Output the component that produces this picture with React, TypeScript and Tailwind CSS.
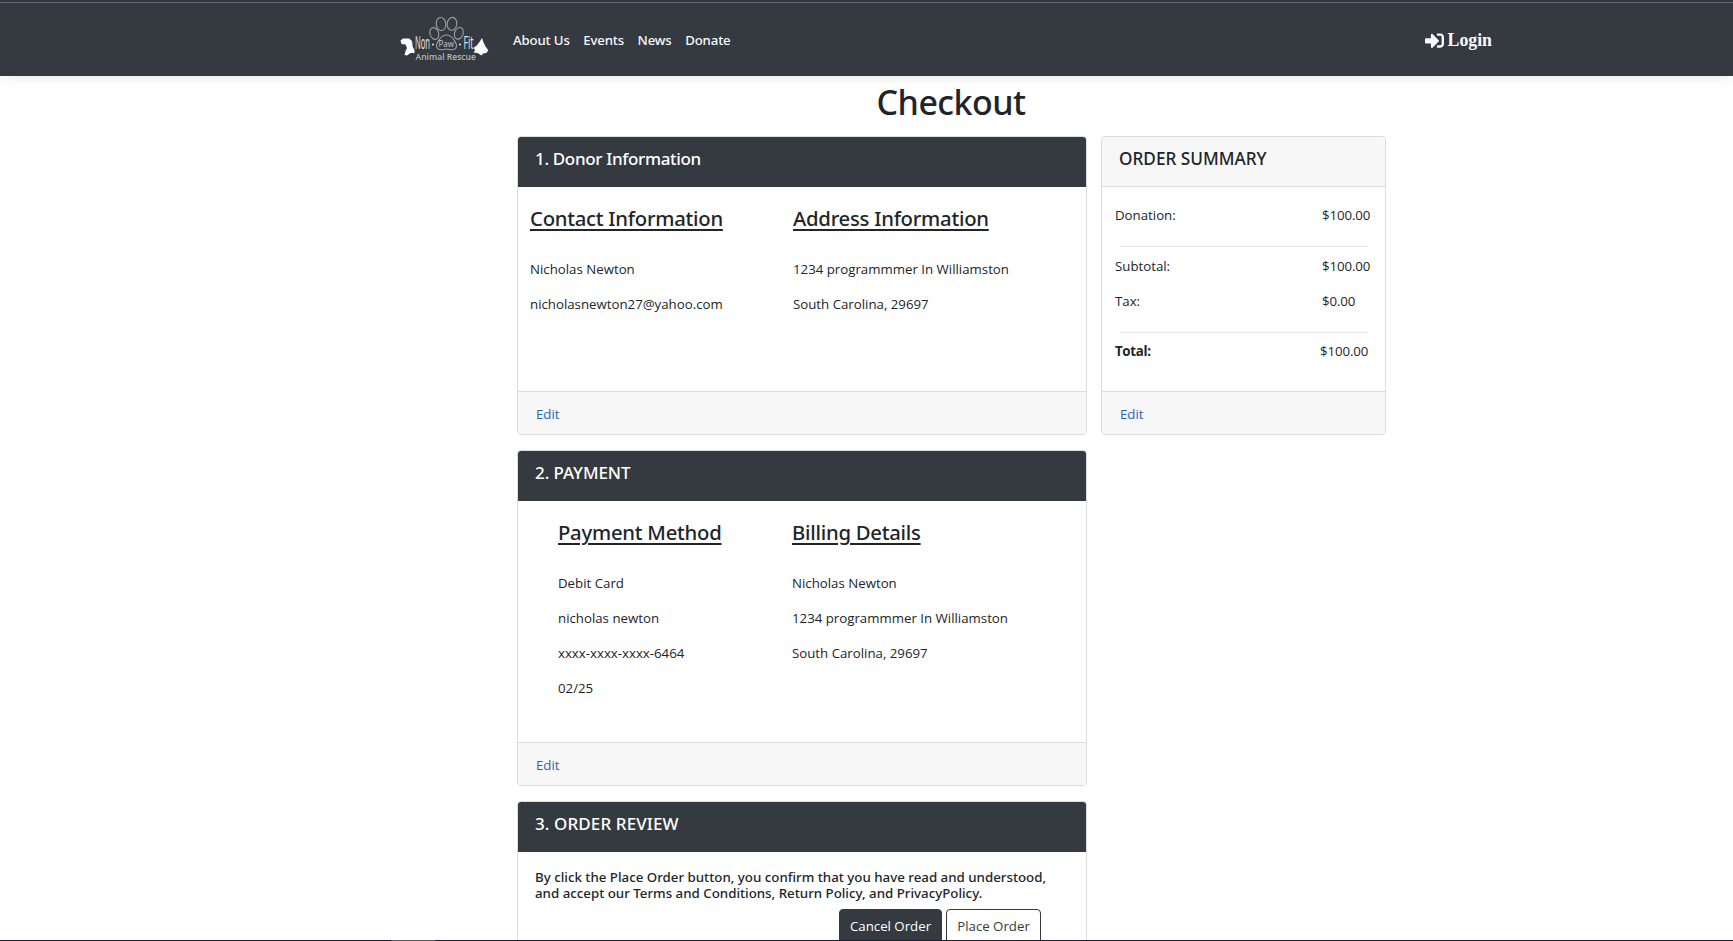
import React from "react";
import { FaSignInAlt } from "react-icons/fa";

function Logo() {
  return (
    <svg width="100" height="60" viewBox="0 0 100 60" className="block" fontFamily="Open Sans, sans-serif">
      <g fill="none" stroke="#9da1a6" strokeWidth="1.1">
        <ellipse cx="46" cy="14" rx="4.8" ry="6.5" transform="rotate(-8 46 14)" />
        <ellipse cx="57" cy="13.8" rx="4.8" ry="6.5" transform="rotate(8 57 13.8)" />
        <ellipse cx="39.3" cy="23.5" rx="4.3" ry="6" transform="rotate(-18 39.3 23.5)" />
        <ellipse cx="63.8" cy="23.3" rx="4.3" ry="6" transform="rotate(18 63.8 23.3)" />
        <path d="M51.500 25c-5 0-6.500 3.500-8.500 6.500-3 4.500-1 8.500 3 8.300 2 0 3-.8 5.500-.8s3.500.8 5.500.8c4 .2 6-3.800 3-8.300-2-3-3.500-6.500-8.500-6.500z" />
      </g>
      <g fill="#e4e6e8">
        <text x="20" y="38.500" fontSize="18.500" textLength="15" lengthAdjust="spacingAndGlyphs">Non</text>
        <text x="68.500" y="38.500" fontSize="18.500" textLength="10" lengthAdjust="spacingAndGlyphs">Fit</text>
        <text x="43.500" y="37" fontSize="8.500" textLength="15.500" lengthAdjust="spacingAndGlyphs" fill="#c9ccd0">Paw</text>
        <text x="20.500" y="50" fontSize="9" fontWeight="600" textLength="60.500" lengthAdjust="spacingAndGlyphs" fill="#b4b8bc">Animal Rescue</text>
        <circle cx="38" cy="34.500" r="1" />
        <circle cx="65" cy="34.500" r="1" />
      </g>
      <g fill="#fff">
        <path d="M5.500 30.500 8 28.500h6l3 2.500.8 6 1.700 3v3H15.500L12 45.500l-2.500-.5 1-4 1.500-3-1.500-3.500-4-.5z" />
        <path d="M87 28l1.500 4.500 2 4 2.800 3.800-2 2.700-3.300.5-1.500 2-4-2.500-4-.5 1.500-2-1.200-3 3-2 3-4z" />
      </g>
    </svg>
  );
}

function CardHeader({ children }: { children: React.ReactNode }) {
  return (
    <h5 className="h-[50px] shrink-0 rounded-t-[3px] bg-[#343a40] px-[17px] pt-[10px] font-['Noto_Sans',sans-serif] text-[17px] leading-[24px] font-medium tracking-[-0.07px] text-white">
      {children}
    </h5>
  );
}

function CardFooter() {
  return (
    <div className="h-[43px] shrink-0 rounded-b-[3px] border-t border-[#dcdcdc] bg-[#f7f7f7] px-[18px] pt-[12px] leading-[21px] text-[#2a62b8]">
      <a href="#edit">Edit</a>
    </div>
  );
}

function Details({ title, lines, className }: { title: string; lines: string[]; className: string }) {
  return (
    <div className={className}>
      <h4 className="mb-[28px] pt-[18px] font-['Noto_Sans',sans-serif] text-[20.3px] leading-[26px] font-medium tracking-[-0.25px] underline decoration-2 underline-offset-[3px]">{title}</h4>
      {lines.map((line) => (
        <p key={line} className="mb-[14px] leading-[21px] whitespace-nowrap">{line}</p>
      ))}
    </div>
  );
}

function Row({ label, value, className = "" }: { label: string; value: string; className?: string }) {
  return (
    <div className={`flex leading-[21px] ${className}`}>
      <span className="w-[207px]">{label}</span>
      <span className="tracking-[-0.1px]">{value}</span>
    </div>
  );
}

export default function App() {
  return (
    <div className="flex h-[941px] flex-col overflow-hidden bg-white font-['Open_Sans',sans-serif] text-[13.25px] text-[#212529]">
      <header className="relative h-[76px] shrink-0 bg-[#343a40] shadow-[0_2px_12px_rgba(0,0,0,0.08)]">
        <div className="h-[3px] border-b border-[#62666c] bg-[#34363f]" />
        <div className="flex items-start pt-[7px] pl-[395px]">
          <Logo />
          <nav className="mt-[20px] ml-[18px] flex gap-[13.5px] font-['Noto_Sans',sans-serif] text-[13.2px] leading-[21px] font-medium tracking-[-0.13px] text-[#f8f9fa]">
            <a href="#about">About Us</a>
            <a href="#events">Events</a>
            <a href="#news">News</a>
            <a href="#donate">Donate</a>
          </nav>
          <a href="#login" className="mt-[19px] mr-[241px] ml-auto flex items-center gap-[4px] font-['Liberation_Serif',serif] text-[17.8px] leading-[22px] font-bold text-[#f8f9fa]">
            <FaSignInAlt className="h-[19px] w-[19px]" />
            Login
          </a>
        </div>
      </header>
      <main className="min-h-0 flex-1 overflow-hidden pl-[517px]">
        <h1 className="h-[60px] w-[868px] pt-[5px] text-center font-['Noto_Sans',sans-serif] text-[34px] leading-[42px] font-medium tracking-[-0.55px]">Checkout</h1>
        <div className="flex items-start gap-[14px]">
          <div className="flex w-[570px] flex-col gap-[15px]">
            <section className="flex h-[299px] flex-col rounded-[4px] border border-[#dcdcdc]">
              <CardHeader>
                <span className="tracking-[-0.33px]">1. Donor Information</span>
              </CardHeader>
              <div className="flex flex-1 pl-[12px]">
                <Details className="w-[263px]" title="Contact Information" lines={["Nicholas Newton", "nicholasnewton27@yahoo.com"]} />
                <Details className="w-[262px]" title="Address Information" lines={["1234 programmmer In Williamston", "South Carolina, 29697"]} />
              </div>
              <CardFooter />
            </section>
            <section className="flex h-[336px] flex-col rounded-[4px] border border-[#dcdcdc]">
              <CardHeader>2. PAYMENT</CardHeader>
              <div className="flex flex-1 pl-[40px]">
                <Details className="w-[234px]" title="Payment Method" lines={["Debit Card", "nicholas newton", "xxxx-xxxx-xxxx-6464", "02/25"]} />
                <Details className="w-[262px]" title="Billing Details" lines={["Nicholas Newton", "1234 programmmer In Williamston", "South Carolina, 29697"]} />
              </div>
              <CardFooter />
            </section>
            <section className="flex h-[200px] flex-col rounded-[4px] border border-[#dcdcdc]">
              <CardHeader>
                <span className="tracking-[0.1px]">3. ORDER REVIEW</span>
              </CardHeader>
              <div className="px-[17px] pt-[17px]">
                <p className="font-['Noto_Sans',sans-serif] text-[13.3px] leading-[16.4px] font-medium whitespace-nowrap">
                  By click the Place Order button, you confirm that you have read and understood,
                  <br />
                  and accept our Terms and Conditions, Return Policy, and PrivacyPolicy.
                </p>
                <div className="mt-[7px] ml-[304px] flex gap-[4px]">
                  <button className="h-[36px] w-[103px] rounded-[4px] border border-[#343a40] bg-[#343a40] text-white">Cancel Order</button>
                  <button className="h-[36px] w-[95px] rounded-[4px] border border-[#343a40] text-[#343a40]">Place Order</button>
                </div>
              </div>
            </section>
          </div>
          <section className="flex h-[299px] w-[285px] flex-col rounded-[4px] border border-[#dcdcdc]">
            <h5 className="h-[50px] shrink-0 rounded-t-[3px] border-b border-[#dcdcdc] bg-[#f7f7f7] px-[17px] pt-[10px] font-['Noto_Sans',sans-serif] text-[17.2px] leading-[24px] font-medium">ORDER SUMMARY</h5>
            <div className="flex-1 pt-[18px] pl-[13px]">
              <Row label="Donation:" value="$100.00" />
              <hr className="mt-[20px] mb-[9px] ml-[5px] w-[248px] border-[#e6e6e6]" />
              <Row label="Subtotal:" value="$100.00" />
              <Row label="Tax:" value="$0.00" className="mt-[14px]" />
              <hr className="mt-[20px] mb-[8px] ml-[5px] w-[248px] border-[#e6e6e6]" />
              <div className="flex leading-[21px]">
                <b className="w-[205px] tracking-[-0.3px]">Total:</b>
                <span className="tracking-[-0.1px]">$100.00</span>
              </div>
            </div>
            <CardFooter />
          </section>
        </div>
      </main>
      <footer className="h-px shrink-0 bg-[#1f1f2b] pl-[391px]">
        <div className="h-px w-[44px] bg-[#58585f]" />
      </footer>
    </div>
  );
}
